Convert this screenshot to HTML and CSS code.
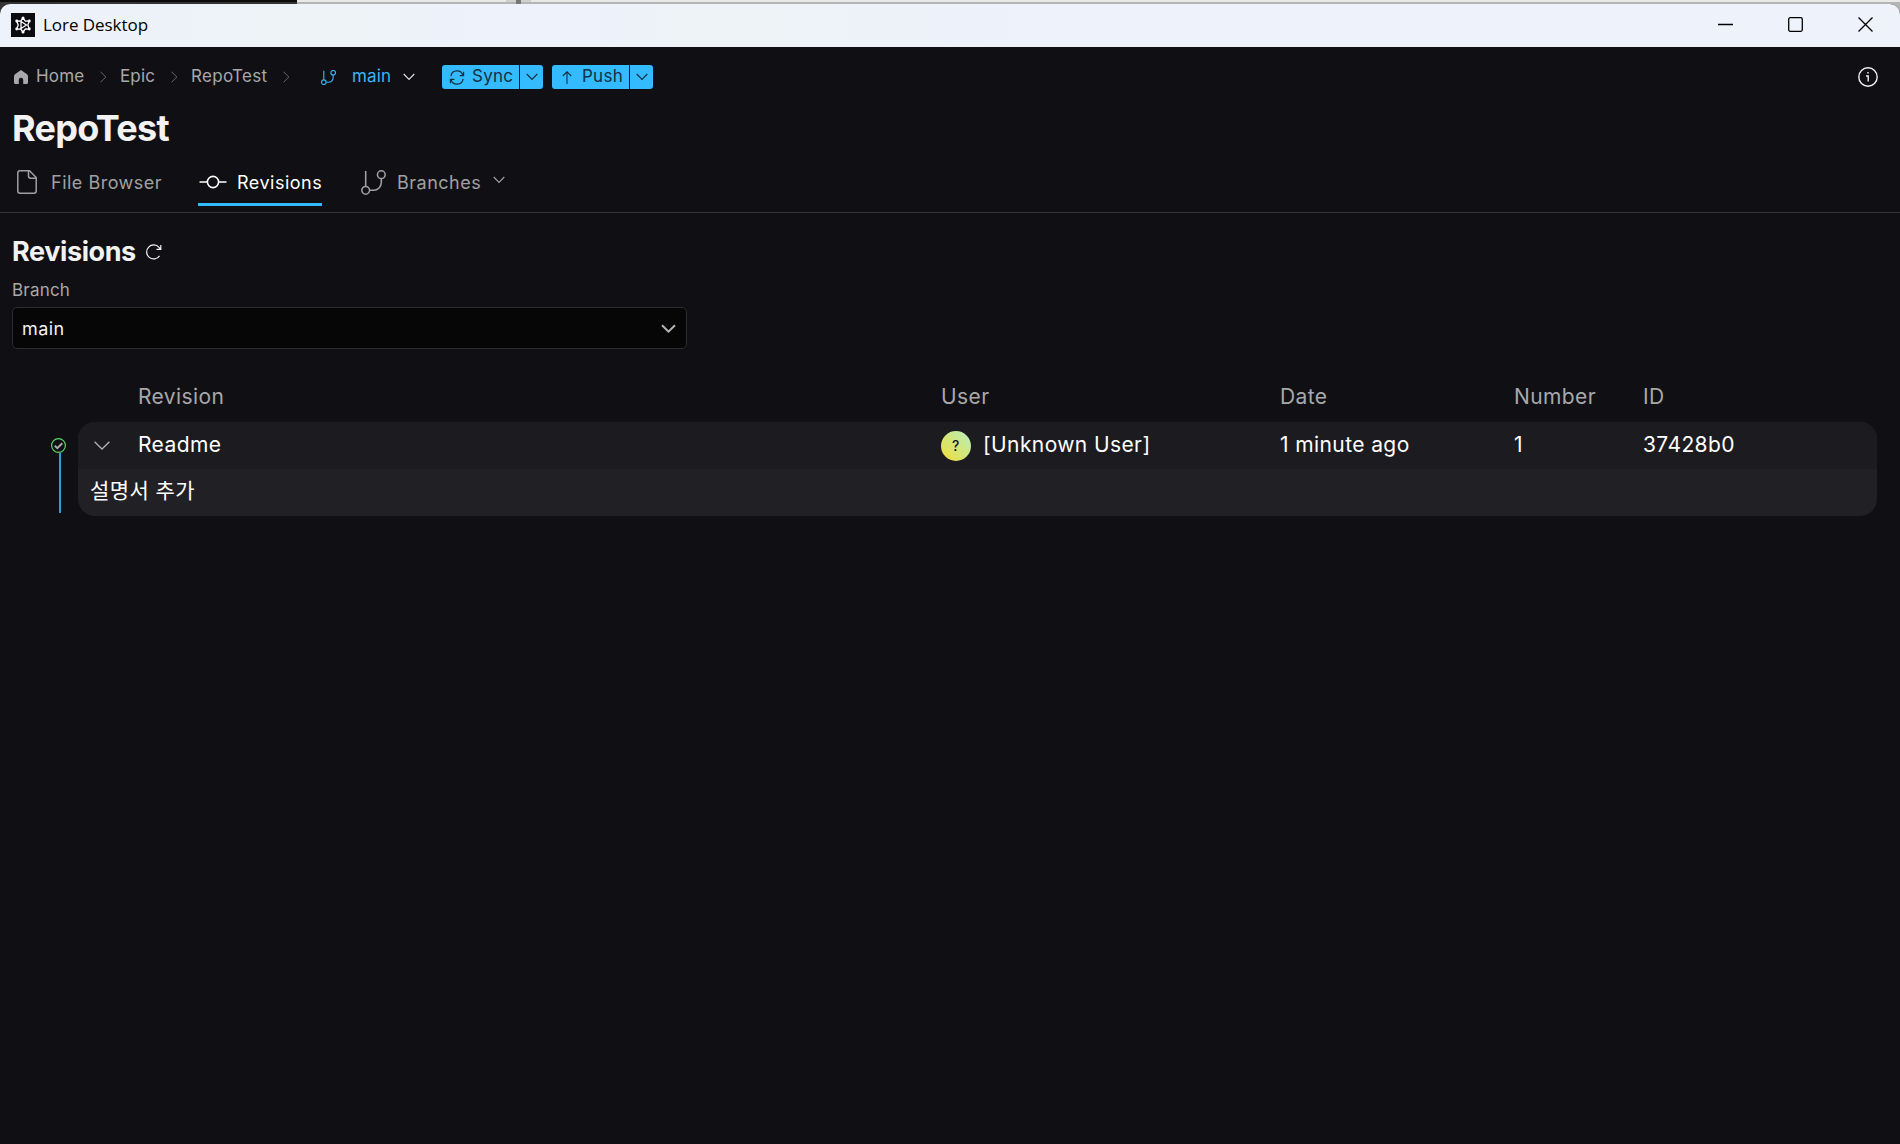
FILE: index.html
```html
<!DOCTYPE html>
<html lang="en">
<head>
  <meta charset="UTF-8">
  <meta name="viewport" content="width=device-width, initial-scale=1.0">
  <title>Lore Desktop</title>
  <link rel="stylesheet" href="styles.css">
</head>
<body>
  <div class="backdrop"></div>
  <div class="window">
    <header class="titlebar">
      <svg class="app-logo" viewBox="0 0 24 24">
        <rect width="24" height="24" fill="#0c0c10"/>
        <g fill="none" stroke="#fff" stroke-width="1.3" stroke-linejoin="round">
          <path d="M12 5l2.4 3.2 4-.4L16.800 12l1.600 4.200-4-.4L12 19l-2.400-3.200-4 .4L7.200 12 5.600 7.800l4 .4z"/>
          <path d="M10 8.500v7l5.500-3.500z"/>
        </g>
        <g fill="#fff">
          <circle cx="12" cy="5" r="1.500"/><circle cx="12" cy="19" r="1.500"/>
          <circle cx="5.700" cy="8" r="1.400"/><circle cx="18.300" cy="8" r="1.400"/>
          <circle cx="5.700" cy="16" r="1.400"/><circle cx="18.300" cy="16" r="1.400"/>
        </g>
      </svg>
      <span class="app-name">Lore Desktop</span>
      <div class="window-controls">
        <svg viewBox="0 0 15 15"><path d="M0 7.500h15"/></svg>
        <svg viewBox="0 0 15 15"><rect x=".7" y=".7" width="13.600" height="13.600" rx="1.500"/></svg>
        <svg viewBox="0 0 15 15"><path d="M.5.5l14 14M14.500.5l-14 14"/></svg>
      </div>
    </header>

    <nav class="toolbar">
      <div class="breadcrumbs">
        <svg class="home-icon" viewBox="0 0 14 14"><path d="M7 0L13 4.200q1 .8 1 2V12.500q0 1.500-1.500 1.500H9.200V10a2.200 2.200 0 0 0-4.400 0v4H1.500Q0 14 0 12.500V6.200q0-1.200 1-2z"/></svg>
        <span class="crumb crumb-home">Home</span>
        <svg class="separator" viewBox="0 0 7 12"><path d="M.5.7L5.800 6 .5 11.300"/></svg>
        <span class="crumb crumb-org">Epic</span>
        <svg class="separator" viewBox="0 0 7 12"><path d="M.5.7L5.800 6 .5 11.300"/></svg>
        <span class="crumb crumb-repo">RepoTest</span>
        <svg class="separator" viewBox="0 0 7 12"><path d="M.5.7L5.800 6 .5 11.300"/></svg>
      </div>
      <div class="branch-picker">
        <svg class="branch-icon" viewBox="0 0 24 24"><path d="M4.500 1v14.500M8.500 19.500H12a7.500 7.500 0 0 0 7.500-7.500V8.500"/><circle cx="4.500" cy="19.500" r="3.700"/><circle cx="19.500" cy="4.500" r="3.700"/></svg>
        <span>main</span>
        <svg class="chevron" viewBox="0 0 12 8"><path d="M.7 1L6 6.500 11.300 1"/></svg>
      </div>
      <div class="split-button">
        <button class="action">
          <svg class="sync-icon" viewBox="0 0 16 16"><path d="M1.500 6.500A6.500 6.500 0 0 1 14.300 6M14.500 9.500A6.500 6.500 0 0 1 1.700 10M15 1.800V6h-4.200M1 14.200V10h4.200"/></svg>
          <span>Sync</span>
        </button>
        <button class="more"><svg class="chevron" viewBox="0 0 12 8"><path d="M.7 1L6 6.500 11.300 1"/></svg></button>
      </div>
      <div class="split-button push">
        <button class="action">
          <svg class="push-icon" viewBox="0 0 10 13"><path d="M5 13V1M.8 5L5 .8 9.200 5"/></svg>
          <span>Push</span>
        </button>
        <button class="more"><svg class="chevron" viewBox="0 0 12 8"><path d="M.7 1L6 6.500 11.300 1"/></svg></button>
      </div>
      <svg class="info-icon" viewBox="0 0 20 20"><circle cx="10" cy="10" r="9.200"/><path d="M8 9h2.200v5.500M10 5v1.600"/></svg>
    </nav>

    <h1>RepoTest</h1>

    <div class="tabs">
      <div class="tab tab-files">
        <svg class="file-icon" viewBox="0 0 20 24"><path d="M3 .8h9.500L19.200 7.500V21a2.200 2.200 0 0 1-2.200 2.200H3A2.200 2.200 0 0 1 .8 21V3A2.200 2.200 0 0 1 3 .8zM11.500 1v5a2.200 2.200 0 0 0 2.200 2.200H19"/></svg>
        <span>File Browser</span>
      </div>
      <div class="tab tab-revisions active">
        <svg class="commit-icon" viewBox="0 0 28 14"><circle cx="14" cy="7" r="5.600"/><path d="M.5 7h8M19.500 7h8"/></svg>
        <span>Revisions</span>
      </div>
      <div class="tab tab-branches">
        <svg class="branch-icon" viewBox="0 0 24 24"><path d="M4.500 1v14.500M8.500 19.500H12a7.500 7.500 0 0 0 7.500-7.500V8.500"/><circle cx="4.500" cy="19.500" r="3.700"/><circle cx="19.500" cy="4.500" r="3.700"/></svg>
        <span>Branches</span>
        <svg class="chevron" viewBox="0 0 12 8"><path d="M.7 1L6 6.500 11.300 1"/></svg>
      </div>
    </div>

    <main>
      <div class="section-title">
        <h2>Revisions</h2>
        <svg class="refresh-icon" viewBox="0 0 16 16"><path d="M13.500 11.800A7 7 0 1 1 13 3.400l1.500 1.700M14.800 1v4.300h-4.300"/></svg>
      </div>
      <div class="field-label">Branch</div>
      <div class="select">
        <span>main</span>
        <svg viewBox="0 0 15 10"><path d="M1 1.200l6.500 6.500L14 1.200"/></svg>
      </div>

      <div class="revision-row table-head">
        <span class="col-name">Revision</span>
        <span class="col-user">User</span>
        <span class="col-date">Date</span>
        <span class="col-number">Number</span>
        <span class="col-id">ID</span>
      </div>

      <div class="revision-list">
        <div class="graph">
          <svg class="check" viewBox="0 0 15 15"><circle cx="7.500" cy="7.500" r="6.900" fill="none" stroke="#58d568" stroke-width="1.200"/><path d="M3.800 7.800l2.500 2.400 5-5" fill="none" stroke="#aaa" stroke-width="2"/></svg>
          <div class="graph-line"></div>
        </div>
        <div class="card">
          <div class="revision-row">
            <svg class="expand" viewBox="0 0 16 9"><path d="M.6.8L8 8l7.400-7.200"/></svg>
            <span class="col-name">Readme</span>
            <span class="col-user"><span class="avatar">?</span><span class="user-name">[Unknown User]</span></span>
            <span class="col-date">1 minute ago</span>
            <span class="col-number">1</span>
            <span class="col-id">37428b0</span>
          </div>
          <div class="description" lang="ko">설명서 추가</div>
        </div>
      </div>
    </main>
  </div>
</body>
</html>
```
FILE: styles.css
```css
* {
  box-sizing: border-box;
}

body {
  margin: 0;
  height: 1144px;
  overflow: hidden;
  background: linear-gradient(90deg, #333 297px, #b4b6b6 297px);
  color: #f2f2f3;
  font-family: Inter, "Noto Sans CJK KR", sans-serif;
  font-size: 17px;
}

svg {
  display: block;
  flex: none;
  fill: none;
  stroke: currentColor;
}

h1, h2 {
  margin: 0;
  font-weight: 700;
}

/* strip of the desktop above the window */
.backdrop {
  height: 4px;
  background:
    linear-gradient(#777, #777) 516px 0 / 5px 4px no-repeat,
    linear-gradient(#d0d0d0, #d0d0d0) 506px 0 / 25px 2px no-repeat,
    linear-gradient(90deg, #0b0b0c 297px, #e8e8e8 297px) 0 0 / 100% 2px no-repeat,
    linear-gradient(90deg, #333 297px, #b4b6b6 297px);
}

.window {
  height: 1140px;
  background: #101014;
  border-radius: 10px 10px 0 0;
  overflow: hidden;
}

.titlebar {
  display: flex;
  align-items: center;
  height: 43px;
  padding: 0 27px 2px 11px;
  background: linear-gradient(90deg, #edf2fb, #eef3f7 18%, #edf2fb 25%, #edf2fb 31%, #eef3f7 37%, #edf2fb 55%);
  color: #000;
}

.app-logo {
  width: 24px;
  height: 24px;
  stroke: none;
}

.app-name {
  margin: 0 auto 0 8px;
  padding-bottom: 1px;
  font-family: "Open Sans", sans-serif;
  font-size: 17px;
  letter-spacing: -0.05px;
}

.window-controls {
  display: flex;
  gap: 55px;
}

.window-controls svg {
  width: 15px;
  height: 15px;
  stroke-width: 1.3;
}

.toolbar {
  display: flex;
  align-items: center;
  height: 60px;
  padding: 0 22px 0 14px;
  letter-spacing: 0.15px;
}

.breadcrumbs {
  display: flex;
  align-items: center;
  color: #a8a8aa;
}

.home-icon {
  width: 14px;
  height: 14px;
  margin-right: 8px;
  fill: #a8a8aa;
  stroke: none;
}

.crumb {
  line-height: 24px;
  padding-bottom: 2px;
}

.crumb-home { width: 64px; }
.crumb-org { width: 51px; }

.crumb-repo {
  width: 92px;
  letter-spacing: 0.3px;
}

.separator {
  width: 7px;
  height: 12px;
  margin-right: 13px;
  color: #66666a;
}

.branch-picker {
  display: flex;
  align-items: center;
  width: 121px;
  margin-left: 18px;
  color: #38b6f5;
}

.branch-picker .branch-icon {
  width: 15px;
  height: 15px;
  stroke-width: 1.8;
}

.branch-picker span {
  margin: 0 12px 2px 16px;
  line-height: 24px;
}

.chevron {
  width: 12px;
  height: 8px;
  stroke-width: 1.2;
}

.branch-picker .chevron {
  color: #ddd;
}

.split-button {
  display: flex;
  gap: 1px;
  height: 24px;
  margin-right: 9px;
}

.split-button button {
  display: flex;
  align-items: center;
  height: 24px;
  padding: 0;
  border: 0;
  background: #34bbff;
  color: #12303f;
  font: inherit;
  letter-spacing: 0.25px;
}

.split-button .action {
  width: 77px;
  border-radius: 3px 0 0 3px;
}

.split-button .action span {
  margin-left: 7px;
  padding-bottom: 2px;
}

.split-button .more {
  width: 23px;
  justify-content: center;
  border-radius: 0 3px 3px 0;
}

.sync-icon {
  width: 16px;
  height: 15px;
  margin-left: 7px;
  stroke-width: 1.3;
}

.push-icon {
  width: 10px;
  height: 13px;
  margin-left: 10px;
  stroke-width: 1.1;
}

.push .action .push-icon + span {
  margin-left: 10px;
}

.info-icon {
  width: 20px;
  height: 20px;
  margin-left: auto;
  stroke-width: 1.4;
}

h1 {
  height: 44px;
  padding-left: 12px;
  font-size: 36px;
  line-height: 42px;
  letter-spacing: -0.7px;
}

.tabs {
  display: flex;
  align-items: flex-start;
  height: 62px;
  padding: 12px 0 0 17px;
  border-bottom: 1px solid #333338;
  color: #a0a0a2;
  font-size: 18px;
  letter-spacing: 0.5px;
}

.tab {
  display: flex;
  align-items: center;
  height: 43px;
  padding-bottom: 5px;
}

.tab-files { width: 181px; }
.tab-branches { margin-left: 39px; }

.file-icon {
  width: 20px;
  height: 24px;
  margin-right: 14px;
  stroke-width: 1.5;
}

.commit-icon {
  width: 28px;
  height: 14px;
  margin-right: 10px;
  stroke-width: 1.6;
}

.active {
  width: 124px;
  padding: 0 0 2px 1px;
  border-bottom: 3px solid #34bbff;
  color: #fff;
}

.tab-branches .branch-icon {
  width: 25px;
  height: 25px;
  margin-right: 11px;
  stroke-width: 1.5;
}

.tab-branches .chevron {
  margin: 0 0 4px 12px;
}

main {
  padding: 23px 23px 0 12px;
}

.section-title {
  display: flex;
  align-items: center;
  height: 32px;
}

h2 {
  width: 134px;
  font-size: 27px;
  line-height: 32px;
  letter-spacing: -0.4px;
}

.refresh-icon {
  width: 16px;
  height: 16px;
  stroke-width: 1.2;
}

.field-label {
  height: 39px;
  padding-top: 12px;
  color: #a8a8aa;
  line-height: 20px;
  letter-spacing: 0.2px;
}

.select {
  display: flex;
  align-items: center;
  justify-content: space-between;
  width: 675px;
  height: 42px;
  padding: 0 10px 0 9px;
  border: 1px solid #2c2c30;
  border-radius: 5px;
  background: #060606;
  font-size: 18px;
  letter-spacing: 0.4px;
}

.select svg {
  width: 15px;
  height: 10px;
  margin-top: 2px;
  color: #b4b4b4;
  stroke-width: 2;
}

.revision-row {
  display: grid;
  grid-template-columns: 60px 803px 339px 234px 129px 1fr;
  align-items: center;
  height: 47px;
  font-size: 21px;
  letter-spacing: 0.4px;
}

.table-head {
  margin: 24px 0 2px 66px;
  color: #a8a8aa;
}

.col-name { grid-column: 2; }

.revision-list {
  display: flex;
}

.graph {
  width: 66px;
  padding: 16px 0 0 39px;
}

.check {
  width: 15px;
  height: 15px;
}

.graph-line {
  width: 2px;
  height: 60px;
  margin-left: 8px;
  background: #2a9ed8;
}

.card {
  flex: 1;
  border-radius: 17px;
  background: #212125;
  overflow: hidden;
}

.card .revision-row {
  background: #1c1c20;
  color: #fff;
}

.card .col-name,
.card .col-date,
.card .col-number,
.card .col-id,
.user-name {
  padding-bottom: 2px;
}

.expand {
  width: 16px;
  height: 9px;
  margin-left: 16px;
  color: #b0b0b2;
  stroke-width: 1.3;
}

.col-user {
  display: flex;
  align-items: center;
}

.avatar {
  width: 30px;
  height: 30px;
  margin: 1px 12px 0 0;
  border-radius: 50%;
  background: linear-gradient(45deg, #f3dc35, #b5f0c0);
  color: #111;
  font-size: 14px;
  font-weight: 500;
  line-height: 30px;
  text-align: center;
}

.description {
  height: 47px;
  padding-left: 12px;
  color: #fff;
  font-size: 21px;
  line-height: 44px;
  letter-spacing: 0.4px;
}
```
